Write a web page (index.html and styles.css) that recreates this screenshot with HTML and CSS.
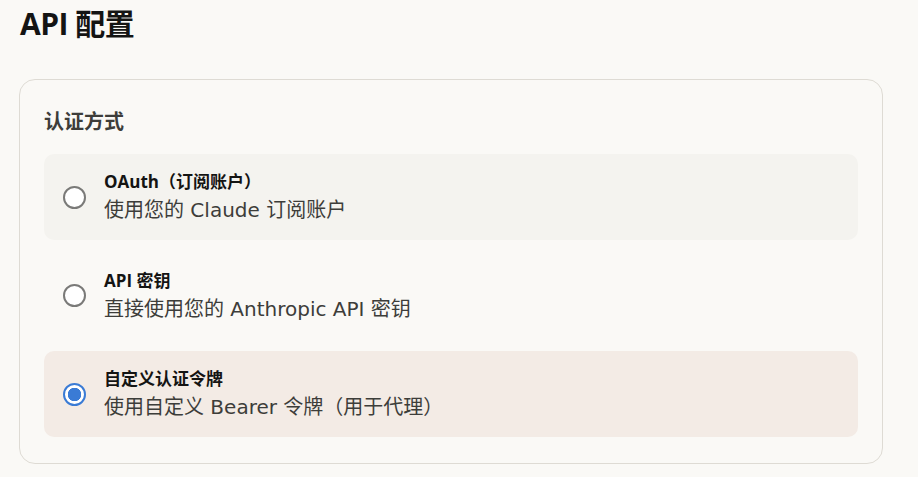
FILE: index.html
```html
<!DOCTYPE html>
<html lang="zh-CN">
<head>
<meta charset="utf-8">
<link rel="stylesheet" href="styles.css">
</head>
<body>
<div class="page">
  <h1 class="title">API 配置</h1>
  <section class="card">
    <h2 class="card-title">认证方式</h2>
    <div class="options">
      <label class="option option-hover">
        <span class="radio"></span>
        <span class="text">
          <span class="label">OAuth（订阅账户）</span>
          <span class="desc">使用您的 Claude 订阅账户</span>
        </span>
      </label>
      <label class="option">
        <span class="radio"></span>
        <span class="text">
          <span class="label">API 密钥</span>
          <span class="desc">直接使用您的 Anthropic API 密钥</span>
        </span>
      </label>
      <label class="option option-selected">
        <span class="radio radio-checked"></span>
        <span class="text">
          <span class="label">自定义认证令牌</span>
          <span class="desc">使用自定义 Bearer 令牌（用于代理）</span>
        </span>
      </label>
    </div>
  </section>
</div>
</body>
</html>
```

FILE: styles.css
```css
html, body {
  margin: 0;
  padding: 0;
  background: #faf9f6;
}
body {
  font-family: "Open Sans", "Noto Sans CJK SC", sans-serif;
  color: #141413;
}
.page {
  padding: 3px 35px 0 19px;
}
.title {
  margin: 0 0 0 1px;
  font-size: 30px;
  font-weight: 700;
  line-height: 42px;
  color: #141413;
  letter-spacing: -0.5px;
}
.card {
  margin-top: 34px;
  border: 1px solid #dedbd4;
  border-radius: 16px;
  padding: 27px 24px 26px 24px;
}
.card-title {
  margin: 0 0 17px 0;
  font-size: 20px;
  font-weight: 700;
  line-height: 30px;
  color: #3d3d3a;
}
.options {
  display: flex;
  flex-direction: column;
  gap: 12.5px;
}
.option {
  display: flex;
  align-items: center;
  height: 86px;
  box-sizing: border-box;
  padding: 0 19px;
  border-radius: 10px;
}
.option-hover {
  background: #f4f3ef;
}
.option-selected {
  background: #f3ebe5;
}
.radio {
  flex: none;
  width: 23px;
  height: 23px;
  box-sizing: border-box;
  border: 2px solid #7a7a78;
  border-radius: 50%;
  background: #ffffff;
  margin-right: 18px;
}
.radio-checked {
  border-color: #3a7bd5;
  background: radial-gradient(circle, #3a7bd5 0 6.5px, #ffffff 7px);
}
.text {
  display: flex;
  flex-direction: column;
}
.label {
  font-size: 17px;
  font-weight: 700;
  line-height: 26px;
  color: #141413;
}
.desc {
  font-family: "DejaVu Sans", "Noto Sans CJK SC", sans-serif;
  font-size: 20px;
  line-height: 30px;
  color: #3d3d3a;
}
```
